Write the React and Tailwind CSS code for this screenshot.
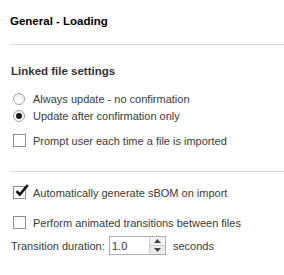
import React from 'react';

function Radio({ checked }) {
    return (
        <span className="flex h-[12px] w-[12px] items-center justify-center rounded-full border border-[#a3a3a3] bg-gradient-to-b from-[#ececec] to-white">
            {checked && <span className="h-[6px] w-[6px] rounded-full bg-[#1a1a1a]" />}
        </span>
    );
}

function Check({ checked }) {
    return (
        <span className="relative block h-[13px] w-[13px] border border-[#8e8e8e] bg-white">
            {checked && (
                <svg className="absolute left-[1px] top-[-4px]" width="14" height="14" viewBox="0 0 14 14">
                    <path d="M1.5 8.2 L4.8 11.5 L12.8 2" fill="none" stroke="#111" strokeWidth="2.6" strokeLinejoin="miter" />
                </svg>
            )}
        </span>
    );
}

function Row({ children, control, className = '' }) {
    return (
        <div className={'flex h-[17px] items-center pl-[13px] ' + className}>
            <span className="w-[20px] shrink-0">{control}</span>
            <span className="whitespace-nowrap text-[11px] leading-[14px] text-[#3a3a3a]">{children}</span>
        </div>
    );
}

export default function App() {
    return (
        <div className="h-[275px] w-[284px] bg-white pt-[14px] font-['Liberation_Sans',Arial,sans-serif]">
            <h1 className="pl-[10px] text-[11.5px] font-bold leading-[14px] text-black">General - Loading</h1>
            <div className="ml-[10px] mt-[16px] h-px bg-[#d9d9d9]" />

            <h2 className="mt-[19px] pl-[11px] text-[11.5px] font-bold leading-[14px] text-[#333]">Linked file settings</h2>
            <Row className="mt-[12px]" control={<Radio />}>Always update - no confirmation</Row>
            <Row control={<Radio checked />}>Update after confirmation only</Row>
            <Row className="mt-[8px]" control={<Check />}>Prompt user each time a file is imported</Row>

            <div className="ml-[10px] mt-[22px] h-px bg-[#d9d9d9]" />

            <Row className="mt-[12px]" control={<Check checked />}>Automatically generate sBOM on import</Row>
            <Row className="mt-[13px]" control={<Check />}>Perform animated transitions between files</Row>

            <div className="mt-[5px] flex h-[19px] items-center whitespace-nowrap pl-[11px] text-[11px] leading-[14px] text-[#3a3a3a]">
                <span className="w-[98px]">Transition duration:</span>
                <div className="flex h-[19px] w-[57px] border border-[#abadb3] bg-white">
                    <span className="flex flex-1 items-center pl-[2px]">1.0</span>
                    <div className="flex w-[16px] flex-col border-l border-[#d0d0d0]">
                        <span className="flex flex-1 items-center justify-center bg-[#f3f3f3]">
                            <svg width="7" height="4" viewBox="0 0 7 4"><path d="M0 4 L3.5 0 L7 4 Z" fill="#444" /></svg>
                        </span>
                        <span className="flex flex-1 items-center justify-center border-t border-[#d0d0d0] bg-[#eaeaea]">
                            <svg width="7" height="4" viewBox="0 0 7 4"><path d="M0 0 L3.5 4 L7 0 Z" fill="#444" /></svg>
                        </span>
                    </div>
                </div>
                <span className="ml-[7px]">seconds</span>
            </div>
        </div>
    );
}
